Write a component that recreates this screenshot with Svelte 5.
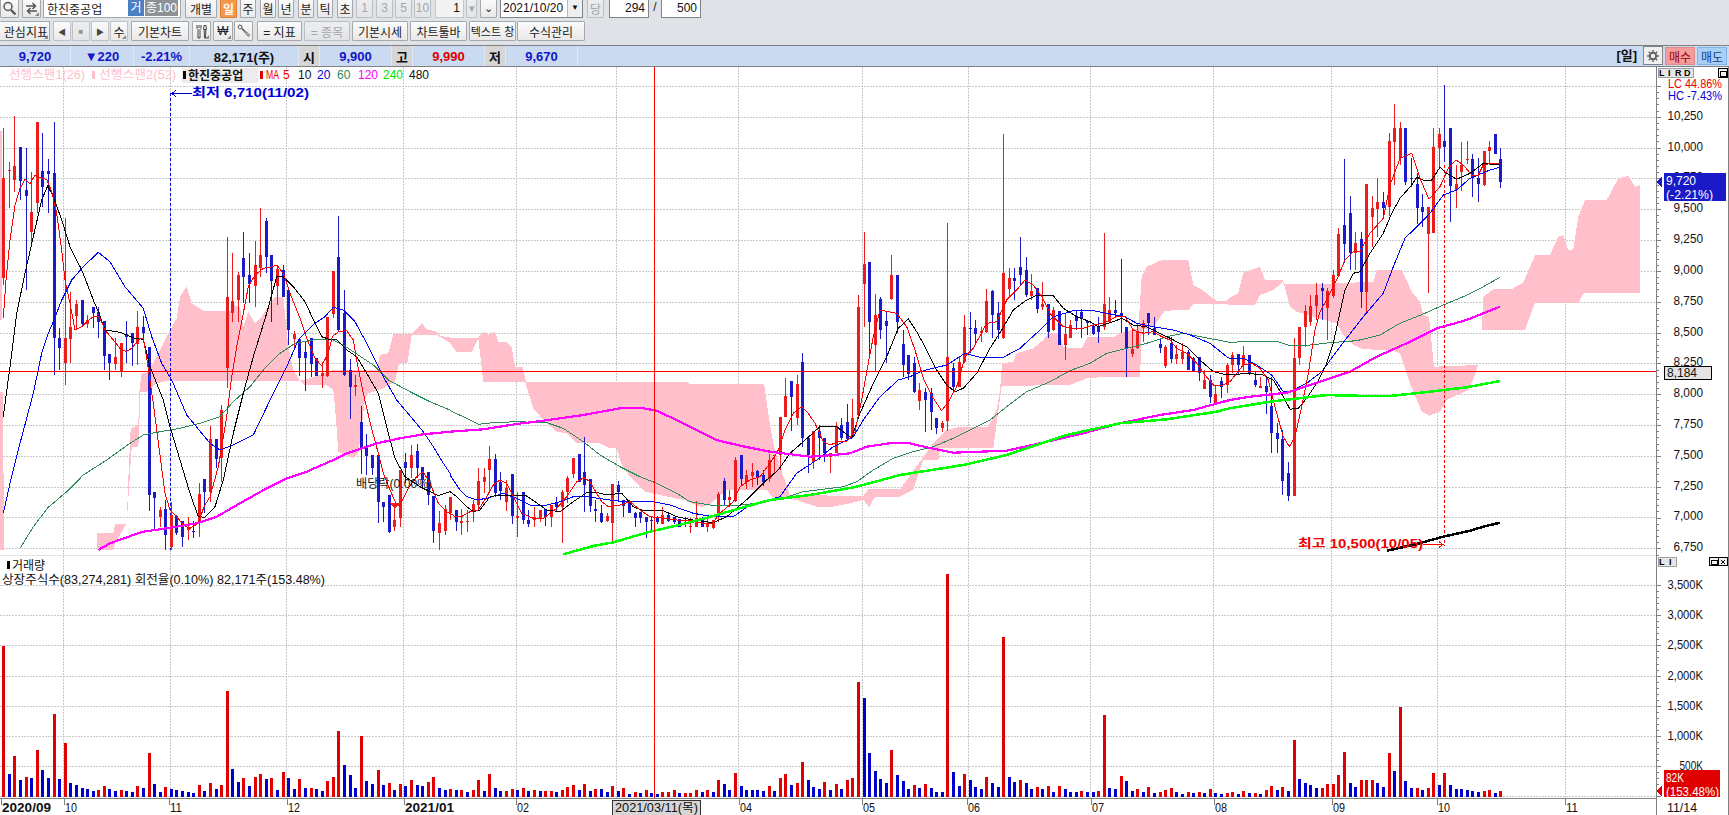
<script>
  // reading helpers: chart data was taken from 3x crops, so each block has its own origin
  const Z5 = [0, 100];
  const Z6 = [450, 300];
  const Z7 = [800, 100];
  const Z8 = [1230, 90];

  function pts(zone, s) {
    return s.trim().split(/\s+/).map((p) => {
      const [a, b] = p.split(",").map(Number);
      return [zone[0] + a / 3, zone[1] + b / 3];
    });
  }
  const line = (list) => list.map((p) => p[0].toFixed(1) + "," + p[1].toFixed(1)).join(" ");

  const barX = (i) => Math.round(3.3 + 5.586 * i);

  // candles: colour top,bottom,high,low
  const candleBlocks = [
    [Z5, `r235,535,85,555 r210,212,185,325 r198,240,48,275 b142,242,142,300 b270,288,145,570 r335,395,215,440 r67,310,67,340 b212,262,100,320 b212,222,178,340 b218,715,67,825
      b713,743,685,810 r713,790,355,855 r680,716,575,790 r612,648,600,690 b600,672,600,680 r660,672,645,685 b622,640,620,685 b635,665,620,715 b663,767,663,810 b763,790,763,840
      r770,792,715,810 r730,815,730,830 b702,712,662,790 b700,728,700,798 r680,732,632,795 b680,698,648,730 b742,1185,742,1232 b1175,1193,1175,1290 r1230,1250,1220,1280 b1227,1305,1200,1350
      r1245,1340,1205,1350 b1248,1300,1245,1305 b1262,1310,1262,1342 r1280,1290,1250,1320 b1292,1294,1262,1315 r1182,1265,1150,1312 b1137,1175,1137,1240 r1018,1175,978,1205 b1018,1077,1018,1105 r930,1075,915,1145
      r590,805,410,865 r603,640,460,665 r525,600,515,665 b473,530,395,610 b525,552,460,610 r495,558,422,622 r465,503,325,530 b362,472,355,520 b465,542,465,665 r507,558,495,615
      b510,592,495,592 b570,690,570,735 r702,716,693,745 b717,775,717,828 b757,775,725,872 b715,792,715,830 b775,828,775,828 r818,828,785,865 r652,828,652,830 r513,642,513,655
      b470,690,348,695 b638,825,570,828 b810,860,778,957 r855,860,825,888 b965,1045,918,1122 b1040,1068,1003,1125 b1065,1105,1065,1125 b1065,1205,1065,1268 b1205,1222,1205,1265 b1185,1295,1185,1298
      r1260,1282,1210,1292 r1110,1255,1110,1282 b1085,1105,1060,1150 r1065,1105,1035,1135 b1052,1105,1032,1135 b1100,1140,1100,1160 b1115,1185,1115,1215 b1188,1292,1188,1328 r1270,1298,1232,1350 r1228,1292,1215,1305`],
    [Z6, `r590,640,590,660 b630,665,630,692 r663,668,628,705 r662,666,630,695 r612,635,600,665 r543,615,505,630 r530,545,505,580 r478,510,438,580 b477,580,462,590 b545,572,517,600
      r565,605,540,632 b522,648,522,672 r648,654,575,710 b575,660,575,672 b660,672,630,682 r652,660,620,680 r630,655,630,665 b628,652,628,678 r615,652,615,680 b605,620,590,632
      r575,620,570,728 r533,575,528,610 r473,522,473,535 b463,545,463,545 b515,555,410,635 b538,618,538,635 b628,632,600,665 b638,665,615,668 r648,662,640,665 r552,670,552,725
      b555,575,543,605 b600,618,600,652 b605,638,600,640 b638,653,635,682 b635,655,635,668 b652,665,652,715 b660,662,650,690 b655,665,648,672 r645,672,620,672 b645,662,640,665
      b650,665,650,672 b658,680,660,682 b670,672,650,682 r678,680,655,698 r655,680,602,682 b655,680,650,682 r670,680,650,695 r660,685,660,688 r582,650,575,665 b543,600,535,617
      r590,600,570,620 r480,603,472,605 b465,538,465,558 r525,545,510,568 r517,527,488,560 b512,530,510,555 b525,545,510,558 r480,538,462,545 r465,468,465,520 r350,465,350,510
      r288,352,235,352 b243,292,243,392 r252,353,225,375`],
    [Z7, `b787,1015,760,1040 b1015,1065,1015,1118 r992,1085,992,1108 b992,1015,975,1080 b1015,1060,1015,1085 r1060,1072,1060,1120 r978,1060,965,1060 b975,1015,955,1020 b965,1018,912,1020 r955,1012,897,1015
      r622,945,585,950 r492,552,396,680 b487,665,487,772 r645,735,583,815 b597,690,590,718 b663,678,635,790 r525,598,465,600 b525,665,525,700 b732,795,690,832 b765,822,765,840
      b790,875,772,880 r870,902,850,930 b877,900,865,995 b880,935,865,990 b953,985,953,1002 r968,985,962,995 r772,962,370,992 b805,862,790,872 r785,860,770,862 r682,787,645,790
      b685,688,635,760 b685,702,660,735 r693,700,680,725 r603,695,567,700 b573,645,570,715 b640,690,605,718 r520,715,102,718 r533,567,503,595 b535,542,505,600 b500,525,412,555
      b510,585,472,590 r573,587,522,600 b565,628,565,640 r612,620,545,630 b612,695,612,715 r630,690,622,692 b633,735,633,735 r702,735,640,780 r675,713,660,715 b650,662,630,690
      b635,655,628,715 b662,670,660,705 b678,703,670,705 b680,695,652,730 r612,680,400,690 r630,665,590,670 b630,640,600,650 b638,650,478,700 b682,745,682,832 r748,762,690,772
      r695,745,670,748 r670,685,660,725 b640,670,640,705 b683,705,650,705 b733,743,715,758 r742,798,735,805 b730,778,710,790 r762,778,735,792 r755,778,730,792 b755,810,750,810
      b775,812,770,812 b772,820,772,842 r840,867,810,867 b840,890,825,910 r882,910,855,915 b842,860,830,893 r795,855,790,878`],
    [Z8, `r795,825,785,850 b792,825,792,855 r795,825,768,845 b795,850,795,855 b870,885,845,890 r888,895,860,895 b888,905,860,972 b948,1028,860,1090 b1028,1048,1000,1090 b1048,1172,1020,1215
      b1150,1218,1115,1232 r805,1218,745,1218 r712,805,712,825 r663,712,645,770 r648,695,615,708 r615,648,580,690 b595,602,580,690 r603,655,595,750 r555,618,540,625 r432,558,415,560
      b405,462,207,518 b370,490,318,540 r460,490,425,540 b448,605,425,655 r282,605,282,672 r353,380,318,470 r337,357,265,440 b337,353,305,380 r152,350,130,378 r115,155,42,285
      r115,205,97,225 b115,275,115,285 b265,268,205,290 b282,353,250,402 b352,367,312,412 r350,432,350,608 r172,428,115,430 r132,175,115,230 b154,172,-15,215 b115,287,115,395
      r283,300,225,355 r225,245,155,302 r208,210,153,222 b208,265,192,320 b265,282,205,335 r182,285,182,288 r172,182,153,225 b132,193,132,193 b207,275,173,293`]
  ];

  const candles = [];
  for (const [zone, s] of candleBlocks) {
    for (const item of s.trim().split(/\s+/)) {
      const [t, b, h, l] = item.slice(1).split(",").map(Number);
      const i = candles.length;
      const y = (z) => zone[1] + z / 3;
      const top = Math.round(y(t));
      candles.push({
        x: barX(i),
        up: item[0] === "r",
        top,
        h: Math.max(1, Math.round(y(b)) - top),
        hi: Math.round(y(h)),
        lo: Math.round(y(l))
      });
    }
  }

  // volume bars, top of the bar in crop units against that crop's baseline
  const volBlocks = [
    [801, `r348 b732 r678 b750 r741 b744 r660 b720 b744 r552 b747 r639 b759 b765 b774 b777 b783 r780 r768 b777 b783 r780 b783 b786 r768 b774 r669 b762 b786 r771
      b777 b780 b783 b786 b789 r765 b783 r759 b777 r765 r483 b717 b756 r744 b768 r741 r732 b747 r744 b780 r726 b744 b777 r747 b774 r774 b777 b783 r753 r741
      r603 b705 b735 b774 r618 b753 b762 r720 b765 r759 b780 r762 b768 r750 b765 b768 r756 r741 b774 b780 r777 b780 r780 b786 r780 r750 b783 r732`],
    [681, `b654 b663 r663 r657 b660 r654 b663 r660 b663 r663 r663 b666 r660 r651 r645 b660 r642 b663 r657 b657 b666 r648 b663 r654 b672 r666 b669 r660 b669 b672
      r666 r666 r660 b669 r669 r669 r660 b666 r660 b666 r630 b642 b660 r609 b648 b660 b660 b660 b663 r648 b663 r624 r612 b645 r639 r576 b630 b651 b657 r636
      b660 r642 b657 r630 r624 r336`],
    [681, `b384 b549 b603 b627 b639 r540 b615 b633 b657 r645 b654 r642 b654 b666 b666 r12 b606 b648 r612 b630 b651 b657 r621 b639 b651 r201 b621 b636 r630 b639
      b657 r651 b657 r648 b666 r648 b657 b666 b666 r663 b666 b666 r663 r435 b654 b657 r618 b633 b663 r657 b666 r651 b669 r666 r660 r654 b666 b672 r666 b669
      r666 b669 r657 b669 b672 r669`],
    [891, `r876 b882 r873 b879 r879 b882 r870 r858 b870 r861 b873 r720 b837 b849 b855 b864 r864 r852 r852 r825 r756 b849 b861 r840 r840 r840 b849 b861 r759 b813
      r621 b843 b864 r864 b870 r864 r819 b855 r819 b855 b867 b867 b870 b873 b876 r873 r870 b879 r873`]
  ];

  const vols = [];
  for (const [base, s] of volBlocks) {
    for (const item of s.trim().split(/\s+/)) {
      const h = Math.round((base - Number(item.slice(1))) / 3);
      vols.push({ x: barX(vols.length), up: item[0] === "r", y: 797 - h, h });
    }
  }

  // moving averages
  const ma5 = line([
    ...pts(Z5, "10,655 18,540 30,420 45,315 60,265 75,238 90,252 105,225 125,235 140,238 155,275 170,340 185,450 195,540 210,610 225,690 245,680 260,665 280,650 297,648 315,690 340,720 360,745 378,755 395,745 420,715 430,715 440,775 460,910 478,1050 495,1180 510,1230 530,1250 550,1275 570,1285 595,1270 612,1220 630,1190 655,1100 680,950 695,830 712,730 730,640 745,560 765,525 790,505 810,502 830,495 850,520 870,580 900,655 920,715 945,775 965,797 985,760 997,710 1015,695 1040,692 1060,720 1072,790 1090,880 1112,975 1135,1060 1150,1120 1170,1170 1190,1215 1200,1215 1225,1165 1250,1130 1270,1115 1290,1150 1315,1210 1340,1235"),
    ...pts(Z6, "0,640 16,650 34,650 60,635 85,630 110,590 130,555 150,540 170,550 190,590 215,640 250,655 280,655 300,640 320,625 350,590 380,545 402,533 420,545 440,580 455,605 475,620 510,615 540,605 570,630 600,650 640,655 680,660 720,660 760,670 787,670 810,640 850,605 870,560 900,540 930,530 960,490 985,450 1005,390 1030,340 1055,320 1075,340 1095,370 1120,425 1140,435 1165,425 1190,425 1215,395 1235,300 1250,215 1270,110 1290,30"),
    ...pts(Z7, "290,640 320,680 345,750 370,835 400,895 425,932 445,905 470,860 495,770 520,745 560,670 590,665 620,600 650,570 675,540 700,555 725,590 750,640 790,680 820,685 850,685 880,675 910,670 950,650 975,650 1000,690 1030,700 1060,695 1085,710 1110,720 1130,745 1160,760 1190,790 1215,825 1240,855 1270,855"),
    ...pts(Z8, "0,875 20,850 40,825 65,820 90,835 115,870 140,970 160,1040 178,1070 195,1040 215,950 235,850 255,720 270,665 295,620 320,570 345,510 370,485 390,485 420,430 460,385 480,285 510,205 545,190 570,265 597,328 630,290 655,235 678,210 700,225 725,255 745,255 760,225 785,220 810,220")
  ]);
  const ma10 = line([
    ...pts(Z5, "10,950 30,800 50,640 75,520 100,410 125,300 143,258 160,290 185,360 210,440 245,510 265,560 280,600 297,640 315,690 360,697 405,715 430,718 450,800 490,900 510,980 540,1080 570,1180 595,1250 615,1252 645,1220 670,1140 700,1000 730,880 760,770 800,640 830,530 850,530 880,560 915,605 945,670 965,710 985,717 1010,720 1040,750 1070,770 1100,820 1135,880 1165,1000 1185,1075 1215,1130 1260,1160 1290,1175 1315,1187 1350,1175"),
    ...pts(Z6, "0,575 20,590 50,620 70,635 90,630 120,590 150,585 185,585 225,585 255,605 290,630 330,635 370,605 410,578 440,577 470,585 515,580 550,620 580,632 640,632 680,650 730,660 790,668 830,650 860,625 900,590 950,540 985,510 1020,460 1060,425 1110,380 1160,380 1205,415 1230,340 1270,250 1310,170 1345,85"),
    ...pts(Z7, "325,657 350,695 375,740 410,810 440,855 465,875 490,865 530,820 570,745 605,690 640,630 680,600 710,585 760,587 790,625 830,650 870,665 895,680 940,665 965,655 1000,675 1040,680 1070,695 1110,715 1160,740 1200,780 1240,815 1270,822"),
    ...pts(Z8, "0,855 50,850 100,855 130,870 160,920 180,958 205,955 230,925 260,880 290,820 310,760 325,690 345,600 370,550 390,545 420,490 460,430 485,370 510,325 545,285 560,262 585,272 605,270 630,232 650,250 680,268 720,250 760,220 810,225")
  ]);
  const ma20 = line([
    ...pts(Z5, "10,1240 30,1150 60,1030 100,880 125,760 145,700 160,665 185,600 215,540 250,500 295,457 330,485 375,560 430,625 455,710 485,790 515,840 560,945 630,1030 660,1050 700,1035 760,1005 820,880 860,800 895,720 945,670 975,650 1000,622 1030,630 1065,665 1100,730 1150,830 1190,900 1270,995 1300,1040 1330,1090 1350,1120"),
    ...pts(Z6, "0,525 30,570 50,590 80,600 110,595 160,580 200,595 240,615 280,618 330,605 370,590 410,590 480,600 520,605 610,605 660,615 730,640 790,650 850,650 900,615 990,590 1040,520 1100,480 1150,440 1210,410 1240,360 1290,290 1345,240"),
    ...pts(Z7, "330,830 370,812 440,795 495,760 540,772 610,772 660,745 720,690 760,650 820,632 870,630 920,640 975,650 1010,670 1060,680 1120,690 1170,705 1230,730 1280,770"),
    ...pts(Z8, "0,805 40,805 80,825 125,855 160,905 180,905 230,880 275,845 330,770 400,680 460,610 490,530 525,445 575,395 600,370 640,315 680,300 720,265 780,240 810,232")
  ]);
  const ma60 = line([
    ...pts(Z5, "60,1345 100,1280 145,1222 200,1175 250,1125 320,1080 390,1030 430,1005 480,995 540,985 600,970 660,950 700,905 750,860 790,810 840,760 885,730 950,718 1000,720 1030,735 1075,765 1120,795 1165,840 1230,875 1290,905 1350,930"),
    ...pts(Z6, "0,332 40,350 85,373 130,368 200,365 290,368 340,385 400,425 450,465 510,500 570,530 620,550 680,580 720,605 780,615 870,615 920,610 1000,595 1060,575"),
    ...pts(Z7, "50,1170 130,1160 170,1145 220,1110 280,1075 340,1055 400,1040 460,1015 520,985 570,960 620,920 680,875 750,845 810,812 870,790 920,760 980,745 1040,730 1100,710 1150,700 1210,712 1280,725"),
    ...pts(Z8, "0,757 45,755 145,755 175,765 240,765 300,758 380,752 450,735 510,700 580,672 640,645 700,620 760,590 810,562")
  ]);
  const ma120 = line([
    ...pts(Z5, "295,1350 330,1330 400,1305 430,1295 500,1285 590,1270 650,1250 720,1210 800,1165 860,1135 920,1115 1000,1080 1040,1060 1130,1030 1200,1015 1270,1003 1350,995"),
    ...pts(Z6, "0,395 100,388 200,372 280,362 400,345 510,325 580,325 620,332 690,365 800,420 870,437 960,455 1080,470"),
    ...pts(Z7, "100,1065 150,1060 200,1040 280,1028 320,1028 380,1042 460,1058 620,1052 720,1030 850,1000 960,970 1080,945 1180,930 1270,905"),
    ...pts(Z8, "0,930 60,920 170,908 270,875 360,845 440,800 530,760 620,715 710,690 810,650")
  ]);
  const ma240 = line([
    ...pts(Z6, "340,763 430,738 490,727 600,695 700,672 790,648 880,622 960,600 1080,585"),
    ...pts(Z7, "60,1180 170,1160 300,1125 490,1095 620,1065 800,1005 960,970 1100,958 1250,935"),
    ...pts(Z8, "0,955 120,935 290,915 360,917 480,918 600,905 710,892 810,873")
  ]);
  const ma480 = line(pts(Z8, "472,1382 560,1362 640,1340 720,1322 760,1310 810,1298"));

  // ichimoku cloud outline: upper edge left to right, lower edge back again
  const cloudTop = [
    ...pts(Z5, "290,1300 340,1300 345,1272 380,1272 385,1140 392,985 415,975 418,875 425,820 440,820 470,770 500,710 530,655 540,590 560,560 575,610 610,632 690,632 700,615 720,620 730,680 745,635 765,670 785,650 825,590 850,590 865,740 880,810 900,842 915,840 1000,810 1130,810 1140,765 1165,760 1180,702 1235,702 1265,670 1280,688 1310,695 1320,708 1350,712"),
    ...pts(Z6, "0,113 85,113 100,95 115,105 135,95 145,125 170,127 185,140 195,200 218,202 228,245 710,245 720,252 942,252 955,340 970,430 990,500 1020,585 1240,588 1255,568 1350,568"),
    ...pts(Z7, "400,1030 440,990 480,980 565,980 580,950 590,930 600,870 607,790 640,785 650,760 700,745 730,720 745,700 780,700 790,742 845,745 862,712 940,712 960,700 1015,685 1018,640 1025,530 1040,500 1085,480 1165,480 1180,555 1200,565 1250,603 1280,603"),
    ...pts(Z8, "0,622 25,610 40,548 90,530 105,570 160,570 160,582 275,582 430,575 440,540 515,540 530,570 545,605 570,635 580,675 597,680 612,830 745,825 755,720 760,620 790,598 845,597 880,578 915,495 960,495 985,440 1000,435 1015,480 1030,478 1045,380 1065,330 1130,330 1165,265 1195,258 1215,290 1230,285")
  ];
  const cloudBottom = [
    ...pts(Z5, "290,1350 340,1350 345,1330 360,1305 380,1270 395,1042 415,1040 418,985 420,875 440,875 470,850 500,842 900,842 915,855 980,855 1000,870 1005,920 1015,1055 1060,1075 1075,1060 1085,980 1095,895 1105,880 1150,865 1185,845 1197,790 1222,790 1235,705 1310,705 1350,728"),
    ...pts(Z6, "0,130 20,157 65,157 85,115 100,245 225,245 250,325 285,365 320,395 350,400 380,430 450,430 480,445 500,445 515,495 540,530 585,575 640,587 700,600 755,622 780,612 830,570 950,570 965,590 1040,600 1100,620 1140,622 1200,610 1240,600 1258,622 1275,590 1350,590"),
    ...pts(Z7, "320,1180 340,1168 370,1080 415,1080 420,1045 580,1045 605,858 810,855 860,835 900,832 1020,830 1025,690 1060,680 1095,632 1165,630 1180,613 1280,613"),
    ...pts(Z8, "0,645 75,645 90,615 130,600 160,575 180,650 200,665 320,700 340,735 370,765 400,778 480,780 510,790 540,880 575,965 597,977 630,965 650,930 715,900 735,855 745,825 755,720 885,720 915,638 1045,638 1062,608 1230,608")
  ];
  const cloud = line([...cloudTop, ...cloudBottom.slice().reverse()]);

  // grid and axes
  const priceY = (p) => 548.3 - (p - 6750) * 0.12331;
  const priceLabels = [];
  for (let p = 6750; p <= 10250; p += 250) {
    priceLabels.push({ y: priceY(p), text: p.toLocaleString("en-US") });
  }
  const volLabels = [3500, 3000, 2500, 2000, 1500, 1000, 500].map((v, i) => ({
    y: 585 + i * 30.2,
    text: v.toLocaleString("en-US") + "K"
  }));
  const hGrid = [85.9, ...priceLabels.map((l) => l.y), ...volLabels.map((l) => l.y), 796].map(Math.round);
  const vGrid = [63, 170, 286, 403, 516, 616, 738, 862, 968, 1090, 1213, 1331, 1437, 1565];

  const dateLabels = [
    { x: 2, text: "2020/09", strong: true },
    { x: 65, text: "10" },
    { x: 170, text: "11" },
    { x: 288, text: "12" },
    { x: 405, text: "2021/01", strong: true },
    { x: 517, text: "02" },
    { x: 740, text: "04" },
    { x: 863, text: "05" },
    { x: 968, text: "06" },
    { x: 1092, text: "07" },
    { x: 1215, text: "08" },
    { x: 1333, text: "09" },
    { x: 1438, text: "10" },
    { x: 1566, text: "11" }
  ];

  let ticks = "";
  for (let k = 0; k * 6.166 + 85.9 < 555; k++) {
    const y = Math.round(85.9 + k * 6.166);
    ticks += `M1656 ${y}h${k % 5 === 0 ? 5 : 3}`;
  }
  for (let k = 0; k * 6.04 + 585 < 797; k++) {
    const y = Math.round(585 + k * 6.04);
    ticks += `M1656 ${y}h${k % 5 === 0 ? 5 : 3}`;
  }

  // toolbar rows: label, width, gap before the button
  const row1a = [
    { t: "개별", w: 32, ml: 4 },
    { t: "일", w: 17, ml: 3, cls: "active" },
    { t: "주", w: 16, ml: 3 },
    { t: "월", w: 16, ml: 4 },
    { t: "년", w: 16, ml: 2 },
    { t: "분", w: 16, ml: 4 },
    { t: "틱", w: 16, ml: 3 },
    { t: "초", w: 16, ml: 4 },
    { t: "1", w: 17, ml: 3, cls: "off" },
    { t: "3", w: 17, ml: 3, cls: "off" },
    { t: "5", w: 17, ml: 2, cls: "off" },
    { t: "10", w: 17, ml: 2, cls: "off" }
  ];
  const row2 = [
    { t: "◀", w: 18, ml: 3, cls: "flat small" },
    { t: "■", w: 18, ml: 1, cls: "flat small off" },
    { t: "▶", w: 18, ml: 1, cls: "flat small" },
    { t: "수", w: 18, ml: 1, cls: "flat corner" },
    { t: "기본차트", w: 58, ml: 3 },
    { icon: "tools", w: 19, ml: 3, cls: "corner" },
    { t: "₩", w: 20, ml: 2, cls: "corner" },
    { icon: "wrench", w: 19, ml: 1 },
    { t: "= 지표", w: 45, ml: 4 },
    { t: "= 종목", w: 46, ml: 2, cls: "off" },
    { t: "기본시세", w: 56, ml: 2 },
    { t: "차트툴바", w: 57, ml: 2 },
    { t: "텍스트 창", w: 47, ml: 2, cls: "tight" },
    { t: "수식관리", w: 68, ml: 1 }
  ];
  const info = [
    { t: "9,720", w: 71, c: "blue" },
    { t: "▼220", w: 63, c: "blue" },
    { t: "-2.21%", w: 56, c: "blue" },
    { t: "82,171(주)", w: 109, c: "dark" },
    { t: "시", w: 21, c: "tag" },
    { t: "9,900", w: 72, c: "blue" },
    { t: "고", w: 21, c: "tag" },
    { t: "9,990", w: 72, c: "red" },
    { t: "저", w: 21, c: "tag" },
    { t: "9,670", w: 72, c: "blue" }
  ];
</script>

<div class="toolbar">
  <div class="row first">
    <button class="btn icon w19">
      <svg width="15" height="15" viewBox="0 0 15 15"><circle cx="6" cy="5.5" r="4" fill="#eef3f8" stroke="#555" stroke-width="1.5" /><path d="M9 9l4.5 4.5" stroke="#555" stroke-width="2.4" /></svg>
    </button>
    <button class="btn icon w19 ml3 corner">
      <svg width="15" height="15" viewBox="0 0 15 15"><path d="M2 5h9M8.5 2l3 3-3 3M13 10H4M6.5 7l-3 3 3 3" fill="none" stroke="#555" stroke-width="1.5" /></svg>
    </button>
    <div class="stock">
      <span class="stock-name">한진중공업</span>
      <span class="geo">거</span>
      <span class="jong">종100</span>
    </div>
    {#each row1a as b}
      <button class="btn {b.cls ?? ''}" style="width:{b.w}px;margin-left:{b.ml}px">{b.t}</button>
    {/each}
    <div class="field one">1</div>
    <button class="btn off arrow">▾</button>
    <button class="btn arrow chevron">⌄</button>
    <div class="date">2021/10/20<span class="date-arrow">▼</span></div>
    <button class="btn off dang">당</button>
    <div class="field count">294</div>
    <span class="slash">/</span>
    <div class="field total">500</div>
  </div>
  <div class="row second">
    <button class="btn corner clipped">관심지표</button>
    {#each row2 as b}
      <button class="btn {b.cls ?? ''}" style="width:{b.w}px;margin-left:{b.ml}px">
        {#if b.icon === "tools"}
          <svg width="15" height="15" viewBox="0 0 15 15"><path d="M3 1v3.5l1 1V14h2V5.500l1-1V1M5 1v3M10 1.500l-.5 4h3L12 1.500zM10.200 6l.3 8h1l.3-8" fill="none" stroke="#444" stroke-width="1" /></svg>
        {:else if b.icon === "wrench"}
          <svg width="15" height="15" viewBox="0 0 15 15"><path d="M3 1L2 3l1.500 2 2-.5 6.500 7.500c.6.8 2 -.5 1.300-1.300L5.800 4 6 2 4 1z" fill="#eee" stroke="#555" stroke-width="1" /></svg>
        {:else}
          {b.t}
        {/if}
      </button>
    {/each}
  </div>
</div>

<div class="infobar">
  {#each info as cell}
    <span class="cell {cell.c}" style="width:{cell.w}px">{cell.t}</span>
  {/each}
  <span class="spacer"></span>
  <span class="period">[일]</span>
  <button class="gear">
    <svg width="12" height="12" viewBox="0 0 12 12"><circle cx="6" cy="6" r="3.200" fill="none" stroke="#666" stroke-width="2" /><path d="M6 0v2.500M6 9.500V12M0 6h2.500M9.500 6H12M1.800 1.800l1.700 1.700M8.500 8.500l1.700 1.700M10.200 1.800L8.500 3.500M3.500 8.500l-1.700 1.700" stroke="#666" stroke-width="1.400" /></svg>
  </button>
  <button class="trade buy">매수</button>
  <button class="trade sell">매도</button>
</div>

<svg class="chart" width="1729" height="749" viewBox="0 66 1729 749">
  <defs>
    <clipPath id="pricePane"><rect x="0" y="67" width="1656" height="488" /></clipPath>
  </defs>

  <line class="axis" x1="0" x2="1729" y1="66.5" y2="66.5" />

  <g class="grid">
    {#each hGrid as y}
      <line x1="0" x2="1656" y1={y + 0.5} y2={y + 0.5} />
    {/each}
    {#each vGrid as x}
      <line x1={x + 0.5} x2={x + 0.5} y1="67" y2="798" />
    {/each}
  </g>

  <line class="pane-gap" x1="0" x2="1656" y1="555.5" y2="555.5" />

  <g clip-path="url(#pricePane)">
    <polygon class="cloud" points="0,131 2,131 2,320 0,320" />
    <polygon class="cloud" points="0,392 3,392 4,550 0,550" />
    <polygon class="cloud" points={cloud} />

    <line class="dash-blue" x1="170.500" x2="170.500" y1="93" y2="550" />
    <line class="dash-red" x1="1444.500" x2="1444.500" y1="165" y2="546" />

    {#each candles as c}
      <g class={c.up ? "up" : "down"}>
        <rect x={c.x} y={c.hi} width="1" height={Math.max(1, c.lo - c.hi)} />
        <rect x={c.x - 1} y={c.top} width="3" height={c.h} />
      </g>
    {/each}

    <polyline class="ma m60" points={ma60} />
    <polyline class="ma m20" points={ma20} />
    <polyline class="ma m10" points={ma10} />
    <polyline class="ma m5" points={ma5} />
    <polyline class="ma m120" points={ma120} />
    <polyline class="ma m240" points={ma240} />
    <polyline class="ma m480" points={ma480} />

    <polygon class="mark" points="390,503 400,503 396,508 394,508" />
  </g>

  <g>
    {#each vols as v}
      <rect class={v.up ? "vol-up" : "vol-down"} x={v.x - 1} y={v.y} width="3" height={v.h} />
    {/each}
  </g>

  <line class="cross" x1="654.500" x2="654.500" y1="67" y2="798" />
  <line class="cross" x1="0" x2="1656" y1="371.500" y2="371.500" />

  <!-- legend row -->
  <text class="t pink" x="9" y="79" textLength="76" lengthAdjust="spacingAndGlyphs">선행스팬1(26)</text>
  <rect x="92" y="71" width="3" height="8" fill="#ffc0cb" />
  <text class="t pink" x="99" y="79" textLength="77" lengthAdjust="spacingAndGlyphs">선행스팬2(52)</text>
  <rect x="182" y="68" width="76" height="15" fill="#ececec" />
  <rect x="183" y="71" width="3" height="8" fill="#000" />
  <text class="t b" x="188" y="80">한진중공업</text>
  <rect x="260" y="71" width="3" height="8" fill="#e00000" />
  <text class="t red" x="266" y="79" textLength="13" lengthAdjust="spacingAndGlyphs">MA</text>
  <text class="t red" x="283" y="79">5</text>
  <text class="t" x="298" y="79">10</text>
  <text class="t blue" x="317" y="79">20</text>
  <text class="t green" x="337" y="79">60</text>
  <text class="t magenta" x="358" y="79">120</text>
  <text class="t lime" x="383" y="79">240</text>
  <text class="t" x="409" y="79">480</text>

  <!-- price notes -->
  <path class="arrow-blue" d="M172 93.500h20M176 90.500l-4 3 4 3" />
  <text class="t b blue" x="192" y="97" textLength="117" lengthAdjust="spacingAndGlyphs">최저 6,710(11/02)</text>
  <text class="t b red" x="1298" y="548" textLength="125" lengthAdjust="spacingAndGlyphs">최고  10,500(10/05)</text>
  <path class="arrow-red" d="M1423 544.500h20M1439 541.500l4 3-4 3" />
  <text class="t" x="356" y="488" textLength="76" lengthAdjust="spacingAndGlyphs">배당락(0.00%)</text>

  <!-- volume pane text -->
  <rect x="7" y="561" width="3" height="8" fill="#000" />
  <text class="t" x="12" y="570">거래량</text>
  <text class="t" x="2" y="584" textLength="323" lengthAdjust="spacingAndGlyphs">상장주식수(83,274,281) 회전율(0.10%) 82,171주(153.48%)</text>

  <!-- price and volume axis -->
  <path class="axis" d={ticks} />
  <line class="axis" x1="1656.500" x2="1656.500" y1="67" y2="815" />
  <line class="axis" x1="1728.500" x2="1728.500" y1="67" y2="815" />
  <line class="axis" x1="0" x2="1656" y1="798.500" y2="798.500" />

  {#each priceLabels as l}
    <text class="t end" x="1703" y={l.y + 3} textLength={l.text.length * 5.9} lengthAdjust="spacingAndGlyphs">{l.text}</text>
  {/each}
  {#each volLabels as l}
    <text class="t end" x="1703" y={l.y + 4} textLength={l.text.length * 5.9} lengthAdjust="spacingAndGlyphs">{l.text}</text>
  {/each}

  <text class="t red" x="1668" y="88" textLength="54" lengthAdjust="spacingAndGlyphs">LC 44.86%</text>
  <text class="t blue" x="1668" y="100" textLength="54" lengthAdjust="spacingAndGlyphs">HC -7.43%</text>

  <g class="chip">
    <rect x="1658" y="68" width="35" height="9" />
    <text x="1659" y="76">L</text><text x="1668" y="76">I</text><text x="1675" y="76">R</text><text x="1684" y="76">D</text>
    <rect x="1658" y="557" width="18" height="9" />
    <text x="1659" y="565">L</text><text x="1669" y="565">I</text>
  </g>
  <g class="win">
    <rect x="1718.500" y="68.500" width="9" height="9" />
    <path d="M1720 71h6v5h-6z" />
    <rect x="1709.500" y="557.500" width="9" height="8" />
    <path d="M1711 560h6v4h-6z" />
    <rect x="1718.500" y="557.500" width="9" height="8" />
    <path d="M1721 560l4 4M1725 560l-4 4" />
  </g>

  <!-- current value flags -->
  <polygon points="1656,182 1662,177 1662,187" fill="#1a1ac8" />
  <rect x="1664" y="173" width="62" height="28" fill="#1a1ac8" />
  <text class="t white" x="1666" y="185" textLength="30" lengthAdjust="spacingAndGlyphs">9,720</text>
  <text class="t white" x="1666" y="199" textLength="47" lengthAdjust="spacingAndGlyphs">(-2.21%)</text>

  <rect x="1664" y="366" width="47" height="13" fill="#e4e4e4" stroke="#000" />
  <text class="t" x="1667" y="377" textLength="30" lengthAdjust="spacingAndGlyphs">8,184</text>

  <polygon points="1656,791 1662,786 1662,796" fill="#e00000" />
  <rect x="1664" y="770" width="56" height="27" fill="#e00000" />
  <text class="t white" x="1666" y="782" textLength="18" lengthAdjust="spacingAndGlyphs">82K</text>
  <text class="t white" x="1666" y="796" textLength="53" lengthAdjust="spacingAndGlyphs">(153.48%)</text>

  <!-- date axis -->
  {#each dateLabels as d}
    <line class="axis" x1={d.x + 0.5 - 1} x2={d.x + 0.5 - 1} y1="798" y2="805" />
    <text class={d.strong ? "t b" : "t"} x={d.x} y="812" textLength={d.text.length * (d.strong ? 7 : 6)} lengthAdjust="spacingAndGlyphs">{d.text}</text>
  {/each}
  <rect class="stamp" x="612.500" y="800.500" width="88" height="16" />
  <text class="t" x="615" y="812" textLength="83" lengthAdjust="spacingAndGlyphs">2021/03/11(목)</text>
  <text class="t" x="1667" y="812" textLength="30" lengthAdjust="spacingAndGlyphs">11/14</text>
</svg>

<style>
  :global(body) {
    margin: 0;
    overflow: hidden;
    background: #fff;
  }

  .toolbar {
    height: 45px;
    background: #dfe2e7;
    border-bottom: 1px solid #7f7f7f;
    font-family: "Liberation Sans", "Noto Sans CJK KR", sans-serif;
    font-size: 12px;
    color: #222;
    overflow: hidden;
  }

  .row {
    display: flex;
    align-items: flex-start;
  }

  .first {
    height: 23px;
    margin-top: -2px;
  }

  .second {
    height: 21px;
  }

  .btn {
    position: relative;
    box-sizing: border-box;
    height: 20px;
    padding: 0;
    border: 1px solid #a6a8ac;
    border-radius: 1px;
    background: linear-gradient(#fbfbfb, #e9e9e9);
    font: inherit;
    color: #222;
    white-space: nowrap;
    overflow: hidden;
    display: flex;
    align-items: center;
    justify-content: center;
  }

  .w19 {
    width: 19px;
  }

  .ml3 {
    margin-left: 3px;
  }

  .clipped {
    width: 50px;
    justify-content: flex-end;
    padding-right: 1px;
    border-left: 0;
  }

  .corner::after {
    content: "";
    position: absolute;
    right: 1px;
    bottom: 1px;
    border-left: 4px solid transparent;
    border-bottom: 4px solid #8a8a8a;
  }

  .active {
    background: #f79646;
    border-color: #d9803a;
    color: #fff;
    font-weight: bold;
  }

  .off {
    color: #a3a6aa;
    background: linear-gradient(#eceef0, #e2e4e7);
    border-color: #bcbfc3;
  }

  .flat {
    border-color: #c0c2c6;
  }

  .small {
    font-size: 8px;
    color: #444;
  }

  .small.off {
    color: #999;
  }

  .tight {
    font-size: 11px;
  }

  .stock {
    box-sizing: border-box;
    width: 138px;
    height: 20px;
    margin-left: 2px;
    background: #fff;
    border: 1px solid #a6a8ac;
    display: flex;
    align-items: center;
  }

  .stock-name {
    margin-left: 3px;
    width: 81px;
  }

  .geo {
    width: 16px;
    height: 16px;
    background: #4a7fc4;
    color: #fff;
    text-align: center;
    line-height: 16px;
  }

  .jong {
    width: 33px;
    height: 16px;
    margin-left: 1px;
    background: #8d9298;
    color: #fff;
    text-align: center;
    line-height: 16px;
  }

  .field {
    box-sizing: border-box;
    height: 20px;
    background: #fff;
    border: 1px solid #808488;
    text-align: right;
    padding-right: 3px;
    line-height: 18px;
    color: #111;
  }

  .one {
    width: 29px;
    margin-left: 4px;
    background: #f3f3f3;
    border-color: #c4c6ca;
  }

  .arrow {
    width: 11px;
    margin-left: 2px;
    font-size: 11px;
  }

  .chevron {
    width: 17px;
    margin-left: 3px;
  }

  .date {
    box-sizing: border-box;
    width: 83px;
    height: 20px;
    margin-left: 3px;
    background: #fff;
    border: 1px solid #808488;
    color: #111;
    line-height: 18px;
    padding-left: 2px;
    display: flex;
    justify-content: space-between;
  }

  .date-arrow {
    width: 14px;
    font-size: 8px;
    text-align: center;
    background: #efefef;
    border-left: 1px solid #bbb;
  }

  .dang {
    width: 17px;
    margin-left: 4px;
  }

  .count {
    width: 40px;
    margin-left: 5px;
  }

  .slash {
    width: 12px;
    text-align: center;
    line-height: 18px;
  }

  .total {
    width: 40px;
  }

  .infobar {
    height: 20px;
    background: #c9daf1;
    display: flex;
    align-items: stretch;
    font-family: "Liberation Sans", "Noto Sans CJK KR", sans-serif;
    font-size: 13px;
    font-weight: bold;
  }

  .cell {
    box-sizing: border-box;
    display: flex;
    align-items: center;
    justify-content: center;
    border-right: 1px solid #dfe8f5;
    white-space: nowrap;
  }

  .cell.blue {
    color: #1414c8;
  }

  .cell.red {
    color: #e00000;
  }

  .cell.dark {
    color: #111;
  }

  .cell.tag {
    background: #d6d6d6;
    color: #111;
  }

  .spacer {
    flex: 1;
  }

  .period {
    line-height: 20px;
    margin-right: 6px;
    color: #111;
  }

  .gear {
    box-sizing: border-box;
    width: 20px;
    height: 19px;
    padding: 0;
    margin-right: 2px;
    border: 1px solid #808488;
    background: #efefef;
    display: flex;
    align-items: center;
    justify-content: center;
  }

  .trade {
    box-sizing: border-box;
    width: 30px;
    height: 18px;
    margin: 1px 2px 0 0;
    padding: 0;
    font: 12px "Noto Sans CJK KR", sans-serif;
  }

  .buy {
    background: #f49c9c;
    border: 1px solid #e28a8a;
    color: #9a0000;
  }

  .sell {
    background: #a9cff5;
    border: 1px solid #7fb3ea;
    color: #0d3c8f;
  }

  .chart {
    display: block;
    shape-rendering: crispEdges;
  }

  .grid line {
    stroke: #c8c8c8;
    stroke-width: 1;
    stroke-dasharray: 2 1;
  }

  .pane-gap {
    stroke: #e4e4e4;
  }

  .cloud {
    fill: #ffc0cb;
  }

  .up rect {
    fill: #ec1c1c;
  }

  .down rect {
    fill: #1a1ac8;
  }

  .vol-up {
    fill: #e00000;
  }

  .vol-down {
    fill: #0000cc;
  }

  .ma {
    fill: none;
    stroke-width: 1;
  }

  .m5 {
    stroke: #ff0000;
  }

  .m10 {
    stroke: #000;
  }

  .m20 {
    stroke: #0000ff;
  }

  .m60 {
    stroke: #2e8b57;
  }

  .m120 {
    stroke: #ff00ff;
    stroke-width: 2.2;
  }

  .m240 {
    stroke: #00ff00;
    stroke-width: 2.5;
  }

  .m480 {
    stroke: #000;
    stroke-width: 2.5;
  }

  .mark {
    fill: #ec1c1c;
  }

  .cross {
    stroke: #ff0000;
    stroke-width: 1;
  }

  .dash-blue {
    stroke: #0000e0;
    stroke-dasharray: 3 2;
  }

  .dash-red {
    stroke: #ff0000;
    stroke-dasharray: 3 2;
  }

  .arrow-blue {
    fill: none;
    stroke: #0000c8;
  }

  .arrow-red {
    fill: none;
    stroke: #ff0000;
  }

  .axis {
    stroke: #808080;
    stroke-width: 1;
    fill: none;
  }

  .t {
    font-family: "Liberation Sans", "Noto Sans CJK KR", sans-serif;
    font-size: 12px;
    fill: #111;
    shape-rendering: auto;
  }

  .b {
    font-weight: bold;
  }

  .end {
    text-anchor: end;
    font-size: 13px;
  }

  .pink {
    fill: #ffc0cb;
  }

  .red {
    fill: #ee0000;
  }

  .blue {
    fill: #0000d8;
  }

  .green {
    fill: #2e8b57;
  }

  .magenta {
    fill: #ff00ff;
  }

  .lime {
    fill: #00e000;
  }

  .white {
    fill: #fff;
  }

  .chip rect {
    fill: #e6e6e6;
    stroke: #a0a0a0;
  }

  .chip text {
    font-family: "Liberation Sans", sans-serif;
    font-size: 9px;
    font-weight: bold;
    fill: #000;
  }

  .win rect {
    fill: #f2f2f2;
    stroke: #000;
  }

  .win path {
    fill: none;
    stroke: #000;
  }

  .stamp {
    fill: #d6d6d6;
    stroke: #333;
  }
</style>
